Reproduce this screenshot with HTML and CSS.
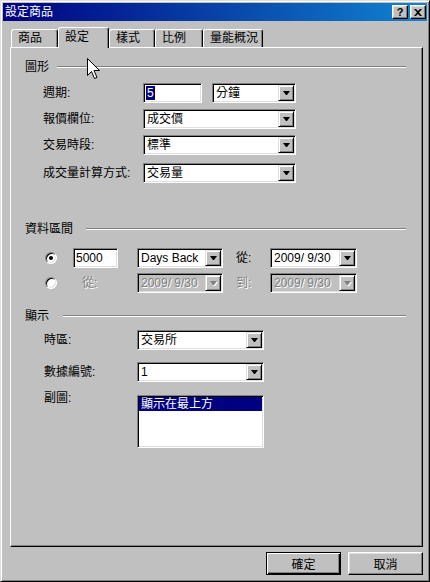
FILE: index.html
```html
<!DOCTYPE html>
<html lang="zh-Hant">
<head>
    <meta charset="UTF-8">
    <title>設定商品</title>
    <link rel="stylesheet" href="styles.css">
</head>
<body>
    <div class="window">
        <div class="titlebar">
            <span class="title">設定商品</span>
            <div class="title-btns">
                <span class="tbtn help">?</span>
                <span class="tbtn close">
                    <svg width="8" height="7" viewBox="0 0 8 7"><path d="M0 0h2l2 2 2-2h2L5 3.5 8 7H6L4 5 2 7H0l3-3.5z" fill="#000"/></svg>
                </span>
            </div>
        </div>

        <div class="tabs">
            <div class="tab t1">商品</div>
            <div class="tab t2 active">設定</div>
            <div class="tab t3">樣式</div>
            <div class="tab t4">比例</div>
            <div class="tab t5">量能概況</div>
        </div>

        <div class="panel">
            <!-- 圖形 -->
            <div class="group g1">
                <div class="group-head"><span>圖形</span><i class="rule"></i></div>
                <div class="rows">
                    <div class="row">
                        <span class="lbl">週期:</span>
                        <div class="field w-period"><span class="hl">5</span></div>
                        <div class="select w-unit"><span class="val">分鐘</span><span class="arrow"></span></div>
                    </div>
                    <div class="row">
                        <span class="lbl">報價欄位:</span>
                        <div class="select w-wide"><span class="val">成交價</span><span class="arrow"></span></div>
                    </div>
                    <div class="row">
                        <span class="lbl">交易時段:</span>
                        <div class="select w-wide"><span class="val">標準</span><span class="arrow"></span></div>
                    </div>
                    <div class="row extra">
                        <span class="lbl">成交量計算方式:</span>
                        <div class="select w-wide"><span class="val">交易量</span><span class="arrow"></span></div>
                    </div>
                </div>
            </div>

            <!-- 資料區間 -->
            <div class="group g2">
                <div class="group-head"><span>資料區間</span><i class="rule"></i></div>
                <div class="rows">
                    <div class="row">
                        <span class="radio checked"></span>
                        <div class="field w-count"><span>5000</span></div>
                        <div class="select w-mode"><span class="val">Days Back</span><span class="arrow"></span></div>
                        <span class="lbl-sm">從:</span>
                        <div class="select w-date"><span class="val">2009/ 9/30</span><span class="arrow"></span></div>
                    </div>
                    <div class="row">
                        <span class="radio"></span>
                        <span class="lbl-from disabled">從:</span>
                        <div class="select w-mode off"><span class="val">2009/ 9/30</span><span class="arrow"></span></div>
                        <span class="lbl-sm disabled">到:</span>
                        <div class="select w-date off"><span class="val">2009/ 9/30</span><span class="arrow"></span></div>
                    </div>
                </div>
            </div>

            <!-- 顯示 -->
            <div class="group g3">
                <div class="group-head"><span>顯示</span><i class="rule"></i></div>
                <div class="rows">
                    <div class="row">
                        <span class="lbl">時區:</span>
                        <div class="select w-mid"><span class="val">交易所</span><span class="arrow"></span></div>
                    </div>
                    <div class="row">
                        <span class="lbl">數據編號:</span>
                        <div class="select w-mid"><span class="val">1</span><span class="arrow"></span></div>
                    </div>
                    <div class="row top">
                        <span class="lbl">副圖:</span>
                        <div class="listbox">
                            <div class="item">顯示在最上方</div>
                        </div>
                    </div>
                </div>
            </div>
        </div>

        <div class="buttons">
            <button class="btn default">確定</button>
            <button class="btn">取消</button>
        </div>

        <svg class="cursor" width="13" height="21" viewBox="0 0 13 21">
            <path d="M0.5 0.5V17.5L4.5 13.5L7.5 20.5L10 19.5L7 12.5H12.5Z" fill="#fff" stroke="#000" stroke-linejoin="miter"/>
        </svg>
    </div>
</body>
</html>
```

FILE: styles.css
```css
body {
    margin: 0;
    background-color: #c0c0c0;
    font-family: "Liberation Sans", "Noto Sans CJK TC", sans-serif;
    font-size: 12px;
    color: #000;
}
.window {
    position: relative;
    width: 430px;
    height: 582px;
    box-sizing: border-box;
    background-color: #c0c0c0;
    border: 1px solid;
    border-color: #dfdfdf #000 #000 #dfdfdf;
    padding: 2px;
    box-shadow: inset 1px 1px #fff, inset -1px -1px #808080;
}
.titlebar {
    height: 18px;
    display: flex;
    align-items: center;
    justify-content: space-between;
    padding: 0 1px 0 2px;
    background: linear-gradient(to right, #000080, #1084d0);
    color: #fff;
    line-height: 14px;
}
.title-btns {
    display: flex;
    gap: 2px;
}
.tbtn {
    width: 16px;
    height: 14px;
    box-sizing: border-box;
    display: flex;
    align-items: center;
    justify-content: center;
    background-color: #c0c0c0;
    border: 1px solid;
    border-color: #fff #000 #000 #fff;
    box-shadow: inset -1px -1px #808080, inset 1px 1px #dfdfdf;
    color: #000;
}
.help {
    font-weight: bold;
    font-size: 11px;
    line-height: 12px;
}
.tabs {
    display: flex;
    align-items: flex-end;
    height: 26px;
    padding-left: 8px;
}
.tab {
    box-sizing: border-box;
    height: 18px;
    padding-left: 6px;
    line-height: 17px;
    border: 1px solid;
    border-bottom: none;
    border-color: #fff #000 transparent #fff;
    border-radius: 3px 3px 0 0;
    box-shadow: inset -1px 0 #808080;
    background-color: #c0c0c0;
    white-space: nowrap;
}
.tab.active {
    height: 21px;
    line-height: 19px;
    margin-bottom: -1px;
    position: relative;
    z-index: 1;
}
.t1 { width: 47px; }
.t2 { width: 51px; }
.t3 { width: 46px; }
.t4 { width: 48px; }
.t5 { width: 60px; }
.panel {
    margin: 0 4px 0 7px;
    height: 500px;
    box-sizing: border-box;
    border: 1px solid;
    border-color: #fff #000 #000 #fff;
    box-shadow: inset -1px -1px #808080;
    padding: 12px 16px 0 14px;
}
.group-head {
    display: flex;
    align-items: center;
    height: 14px;
    line-height: 14px;
}
.group-head span {
    white-space: nowrap;
}
.rule {
    flex: 1;
    height: 2px;
    box-sizing: border-box;
    border-top: 1px solid #808080;
    border-bottom: 1px solid #fff;
}
.g1 .rule { margin-left: 8px; }
.g2 .rule { margin-left: 13px; }
.g3 .rule { margin-left: 14px; }
.rows {
    display: flex;
    flex-direction: column;
}
.row {
    display: flex;
    align-items: center;
    height: 20px;
    line-height: 14px;
    white-space: nowrap;
}
.g1 .rows {
    margin-top: 9px;
    padding-left: 18px;
    gap: 6px;
}
.g1 .lbl { width: 100px; }
.g1 .row.extra { margin-top: 2px; }
.g2 {
    margin-top: 39px;
}
.g2 .rows {
    margin-top: 12px;
    padding-left: 20px;
    gap: 5px;
}
.g3 {
    margin-top: 16px;
}
.g3 .rows {
    margin-top: 7px;
    padding-left: 19px;
    gap: 12px;
}
.g3 .lbl { width: 93px; }
.row.top {
    align-items: flex-start;
    height: auto;
}
.row.top .lbl {
    margin-top: -3px;
}
.field, .select, .listbox {
    box-sizing: border-box;
    border: 1px solid;
    border-color: #808080 #fff #fff #808080;
    box-shadow: inset 1px 1px #000, inset -1px -1px #dfdfdf;
    background-color: #fff;
    padding: 1px;
}
.field {
    display: flex;
    align-items: center;
    height: 20px;
    padding: 1px 2px;
}
.hl {
    background-color: #000080;
    color: #fff;
    padding: 0 1px;
}
.select {
    display: flex;
    align-items: center;
    height: 20px;
}
.select .val {
    flex: 1;
    padding-left: 2px;
    white-space: pre;
    overflow: hidden;
}
.arrow {
    width: 16px;
    height: 16px;
    box-sizing: border-box;
    display: flex;
    align-items: center;
    justify-content: center;
    background-color: #c0c0c0;
    border: 1px solid;
    border-color: #dfdfdf #000 #000 #dfdfdf;
    box-shadow: inset 1px 1px #fff, inset -1px -1px #808080;
}
.arrow::after {
    content: "";
    width: 1px;
    height: 0;
    border-left: 3px solid transparent;
    border-right: 3px solid transparent;
    border-top: 4px solid #000;
}
.select.off {
    background-color: #c0c0c0;
    color: #808080;
}
.select.off .val {
    text-shadow: 1px 1px #fff;
}
.select.off .arrow::after {
    border-top-color: #808080;
    filter: drop-shadow(1px 1px 0 #fff);
}
.disabled {
    color: #808080;
    text-shadow: 1px 1px #fff;
}
.w-period { width: 59px; }
.w-unit { width: 84px; margin-left: 10px; }
.w-wide { width: 153px; }
.w-count { width: 45px; margin-left: 16px; }
.w-mode { width: 86px; margin-left: 19px; }
.w-mode.off { margin-left: 0; }
.w-date { width: 87px; }
.w-mid { width: 127px; }
.lbl-sm {
    width: 34px;
    margin-left: 13px;
}
.lbl-from {
    width: 55px;
    margin-left: 25px;
}
.radio {
    position: relative;
    width: 12px;
    height: 12px;
    box-sizing: border-box;
    border-radius: 50%;
    border: 1px solid;
    border-color: #808080 #fff #fff #808080;
    box-shadow: inset 1px 1px #000, inset -1px -1px #dfdfdf;
    background-color: #fff;
}
.radio.checked::after {
    content: "";
    position: absolute;
    left: 3px;
    top: 3px;
    width: 4px;
    height: 4px;
    border-radius: 50%;
    background-color: #000;
}
.listbox {
    width: 127px;
    height: 53px;
    margin-top: 1px;
}
.item {
    height: 14px;
    line-height: 14px;
    padding-left: 2px;
    background-color: #000080;
    color: #fff;
}
.buttons {
    display: flex;
    justify-content: flex-end;
    gap: 7px;
    margin-top: 5px;
    padding-right: 4px;
}
.btn {
    width: 75px;
    height: 23px;
    box-sizing: border-box;
    font-family: inherit;
    font-size: 12px;
    color: #000;
    background-color: #c0c0c0;
    border: 1px solid;
    border-color: #fff #000 #000 #fff;
    box-shadow: inset -1px -1px #808080, inset 1px 1px #dfdfdf;
    padding: 0;
}
.btn.default {
    border-color: #000;
    box-shadow: inset 1px 1px #fff, inset -1px -1px #000, inset -2px -2px #808080;
}
.cursor {
    position: absolute;
    left: 86px;
    top: 57px;
}
```
